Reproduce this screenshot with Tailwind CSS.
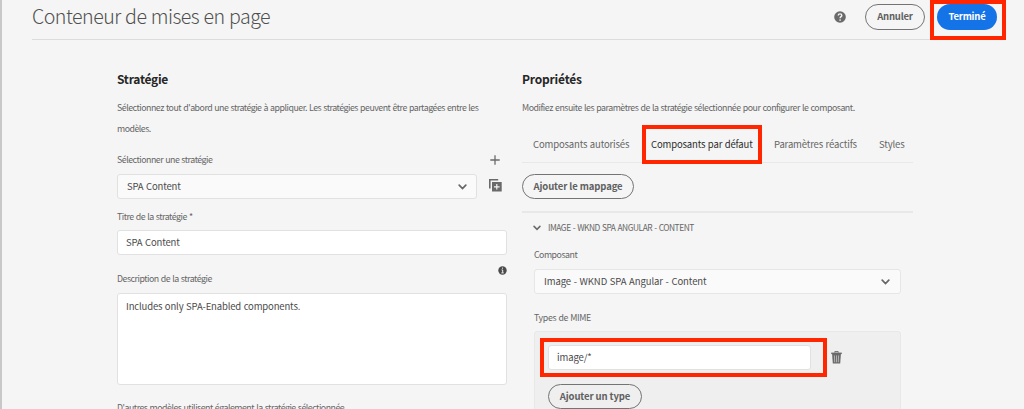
<!DOCTYPE html>
<html lang="fr">
<head>
<meta charset="utf-8">
<title>Conteneur de mises en page</title>
<script src="https://cdn.jsdelivr.net/npm/@tailwindcss/browser@4"></script>
</head>
<body class="h-[409px] w-[1024px] overflow-hidden border-l-2 border-[#c8c8c8] bg-[#f5f5f5] font-['Noto_Sans_CJK_SC','Noto_Sans',sans-serif] text-[8.8px] tracking-[-0.49px] text-[#666666] [word-spacing:0.6px]">
<header class="ml-[30px] flex h-10 w-[974px] items-start border-b border-[#dcdcdc] whitespace-nowrap">
  <h1 class="mt-[1px] flex-1 text-[19.6px] leading-[30px] font-light tracking-[-0.53px] text-[#505050]"><span>Conteneur de mises en page</span></h1>
  <svg class="mt-[11px] mr-[19px] size-3" viewBox="0 0 12 12"><circle cx="6" cy="6" r="5.8" fill="#6a6a6a"/><path d="M4.2 4.5C4.3 2.3 7.8 2.4 7.8 4.4C7.8 5.6 6.1 5.7 6.1 7.2" fill="none" stroke="#f5f5f5" stroke-width="1.4"/><circle cx="6.1" cy="9" r=".85" fill="#f5f5f5"/></svg>
  <button class="mt-[4px] h-[26px] w-[60px] rounded-full border-[1.5px] border-[#747474] pb-px text-[9.5px] font-bold tracking-[-0.2px] text-[#606060]"><span>Annuler</span></button>
  <div class="relative ml-3 pr-[9px]">
    <button class="mt-[4px] h-[26px] w-[60px] rounded-full bg-[#1473e6] pb-px text-[9.5px] font-bold tracking-[-0.2px] text-white"><span>Terminé</span></button>
    <div class="absolute top-0 -left-[7px] h-10 w-[76px] border-4 border-[#ff2600]"></div>
  </div>
</header>
<main class="ml-[115px] flex gap-[15px] whitespace-nowrap">
  <section class="w-[390px]">
    <h2 class="mt-[29px] text-[12px] leading-5 font-bold tracking-[-0.25px] text-[#262626]"><span>Stratégie</span></h2>
    <p class="mt-[8px] leading-[21px]"><span>Sélectionnez tout d'abord une stratégie à appliquer. Les stratégies peuvent être partagées entre les</span><br><span>modèles.</span></p>
    <div class="mt-[11px] flex h-5 items-center justify-between pr-[7px]">
      <span>Sélectionner une stratégie</span>
      <svg class="size-[10px]" viewBox="0 0 10 10" stroke="#6a6a6a" stroke-width="1.3"><path d="M5 .3V9.7M.3 5H9.7"/></svg>
    </div>
    <div class="mt-[4px] flex items-center">
      <div class="flex h-[25px] w-[360px] items-center justify-between rounded-[3px] border border-[#e1e1e1] bg-[#fafafa] pr-[9px] pl-[9px] text-[9.5px] tracking-[-0.15px] text-[#4b4b4b]">
        <span>SPA Content</span>
        <svg class="h-[6px] w-[9px]" viewBox="0 0 9 6" fill="none" stroke="#666" stroke-width="1.7" stroke-linecap="round"><path d="M1.2 1.2L4.5 4.5L7.8 1.2"/></svg>
      </div>
      <svg class="mb-[3px] ml-3 h-[13px] w-[13px]" viewBox="0 0 13 13"><path d="M.8 9.5V.8H9.2" fill="none" stroke="#6a6a6a" stroke-width="1.6"/><rect x="3" y="3" width="9.7" height="9.5" fill="#6a6a6a"/><path d="M7.8 5V10.6M5 7.8H10.6" stroke="#f5f5f5" stroke-width="1.2"/></svg>
    </div>
    <div class="mt-[8px] leading-5"><span>Titre de la stratégie *</span></div>
    <div class="mt-[3px] flex h-[25px] items-center rounded-[3px] border border-[#e1e1e1] bg-white pl-[8px] text-[9.5px] tracking-[-0.15px] text-[#4b4b4b]"><span>SPA Content</span></div>
    <div class="mt-[10px] flex h-[28px] justify-between">
      <span class="mt-[4px] leading-5">Description de la stratégie</span>
      <svg class="mt-[1px] size-[9px]" viewBox="0 0 9 9"><circle cx="4.5" cy="4.5" r="4.2" fill="#4b4b4b"/><path d="M4.5 1.6V2.7M3.5 4H4.7V6.7M3.4 6.9H5.7" stroke="#f5f5f5" stroke-width="1"/></svg>
    </div>
    <div class="h-[92px] rounded-[3px] border border-[#e1e1e1] bg-white pt-[2px] pl-[8px] text-[9.5px] leading-5 tracking-[-0.15px] text-[#4b4b4b]"><span>Includes only SPA-Enabled components.</span></div>
    <p class="mt-[13px] leading-5"><span>D'autres modèles utilisent également la stratégie sélectionnée</span></p>
  </section>
  <section class="w-[391px]">
    <h2 class="mt-[29px] text-[12px] leading-5 font-bold tracking-[-0.2px] text-[#262626]"><span>Propriétés</span></h2>
    <p class="mt-[8px] leading-[21px] tracking-[-0.47px]"><span>Modifiez ensuite les paramètres de la stratégie sélectionnée pour configurer le composant.</span></p>
    <nav class="mt-[7px] flex h-[38px] border-b border-[#e8e8e8] pl-[11px] text-[9.5px] tracking-[-0.15px]">
      <span class="mt-[9px] w-[118px] leading-5">Composants autorisés</span>
      <div class="relative w-[123px]">
        <span class="mt-[9px] block leading-5 text-[#2c2c2c]">Composants par défaut</span>
        <div class="absolute top-0 -left-[9px] h-[39px] w-[120px] border-4 border-[#ff2600]"></div>
      </div>
      <span class="mt-[9px] w-[105px] leading-5">Paramètres réactifs</span>
      <span class="mt-[9px] leading-5">Styles</span>
    </nav>
    <button class="mt-[11px] block h-[25px] w-[112px] rounded-full border-[1.5px] border-[#747474] pb-px text-[9.5px] font-bold tracking-[-0.1px] text-[#606060]"><span>Ajouter le mappage</span></button>
    <div class="mt-[12px] h-[2px] bg-[#e8e8e8]"></div>
    <div class="mt-[5px] flex h-5 items-center pl-[11px]">
      <svg class="h-[6px] w-[8px]" viewBox="0 0 9 6" fill="none" stroke="#6a6a6a" stroke-width="1.7" stroke-linecap="round"><path d="M1.2 1.2L4.5 4.5L7.8 1.2"/></svg>
      <span class="mb-px ml-[7px] text-[8.4px] tracking-[-0.46px]">IMAGE - WKND SPA ANGULAR - CONTENT</span>
    </div>
    <div class="mr-[12px] ml-[12px]">
      <div class="mt-[7px] leading-5"><span>Composant</span></div>
      <div class="mt-[4px] flex h-[25px] items-center justify-between rounded-[3px] border-[1.5px] border-[#e6e6e6] bg-[#fafafa] pr-[10px] pl-[9px] text-[9.5px] tracking-[-0.08px] text-[#4b4b4b]">
        <span>Image - WKND SPA Angular - Content</span>
        <svg class="h-[6px] w-[9px]" viewBox="0 0 9 6" fill="none" stroke="#666" stroke-width="1.7" stroke-linecap="round"><path d="M1.2 1.2L4.5 4.5L7.8 1.2"/></svg>
      </div>
      <div class="mt-[14px] leading-5"><span class="tracking-[-0.35px]">Types de MIME</span></div>
      <div class="mt-[3px] h-[90px] rounded-[3px] border-[1.5px] border-[#e8e8e8] bg-[#efefef] pt-[13px] pl-[13px]">
        <div class="flex items-center">
          <div class="relative">
            <div class="flex h-[25px] w-[263px] items-center rounded-[3px] border border-[#e1e1e1] bg-white pl-[8px] text-[9.5px] tracking-[-0.1px] text-[#4b4b4b]"><span>image/*</span></div>
            <div class="absolute -top-[7px] -left-[8px] h-[39px] w-[287px] border-4 border-[#ff2600]"></div>
          </div>
          <svg class="ml-[20px] h-[13px] w-[11px]" viewBox="0 0 11 13"><path d="M3.8 1.6V.6H7.2V1.6" fill="none" stroke="#6a6a6a"/><rect x=".2" y="1.6" width="10.6" height="1.5" fill="#6a6a6a"/><path d="M1.1 3.1H9.9L9.2 12.6H1.8Z" fill="#6a6a6a"/><path d="M3.4 4.4L3.7 11.3M5.5 4.4V11.3M7.6 4.4L7.3 11.3" stroke="#c4c4c4" stroke-width=".8"/></svg>
        </div>
        <button class="mt-[14px] block h-[25px] w-[94px] rounded-full border-[1.5px] border-[#747474] pb-px text-[9.5px] font-bold tracking-[-0.1px] text-[#606060]"><span>Ajouter un type</span></button>
      </div>
    </div>
  </section>
</main>
</body>
</html>
